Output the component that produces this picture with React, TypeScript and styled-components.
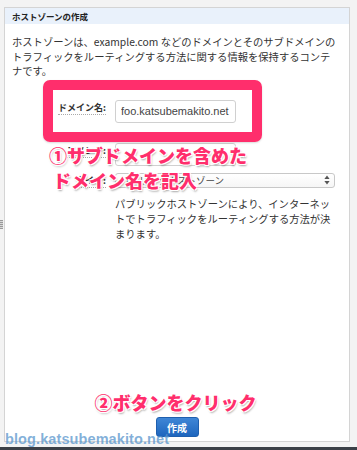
import React from 'react'
import styled, { createGlobalStyle } from 'styled-components'

const GlobalStyle = createGlobalStyle`
  html, body {
    margin: 0;
    padding: 0;
    background: #f3f3f3;
  }
  body {
    font-family: "Noto Sans CJK JP", "Liberation Sans", sans-serif;
    color: #333;
  }
`

const App: React.FC = () => (
  <>
    <GlobalStyle />
    <Page>
      <Handle />
      <Panel>
        <PanelHeader>ホストゾーンの作成</PanelHeader>
        <PanelBody>
          <Intro>
            ホストゾーンは、example.com などのドメインとそのサブドメインの
            <br />
            トラフィックをルーティングする方法に関する情報を保持するコンテ
            <br />
            ナです。
          </Intro>

          <Form>
            <Row>
              <Label>ドメイン名:</Label>
              <TextInput value="foo.katsubemakito.net" readOnly />
            </Row>
            <Row gap={20}>
              <Label>コメント:</Label>
              <TextInput value="" readOnly />
            </Row>
            <Row gap={7}>
              <Label>タイプ:</Label>
              <Select>
                <span>パブリックホストゾーン</span>
                <Arrows>
                  <svg width="6" height="10" viewBox="0 0 6 10">
                    <path d="M3 0.5 L5.6 4 H0.4 Z" fill="#555" />
                    <path d="M3 9.5 L5.6 6 H0.4 Z" fill="#555" />
                  </svg>
                </Arrows>
              </Select>
            </Row>
            <Help>
              パブリックホストゾーンにより、インターネッ
              <br />
              トでトラフィックをルーティングする方法が決
              <br />
              まります。
            </Help>

            <Highlight />
            <Callout>
              ①サブドメインを含めた
              <CalloutLine>ドメイン名を記入</CalloutLine>
            </Callout>
          </Form>
        </PanelBody>

        <PanelFooter>
          <CalloutSmall>②ボタンをクリック</CalloutSmall>
          <CreateButton>作成</CreateButton>
        </PanelFooter>
      </Panel>
      <Watermark>blog.katsubemakito.net</Watermark>
      <BottomBar />
    </Page>
  </>
)

export default App

const Page = styled.div`
  position: relative;
  width: 357px;
  height: 450px;
  padding-top: 7px;
  box-sizing: border-box;
  display: flex;
  flex-direction: column;
  overflow: hidden;
`

const Handle = styled.div`
  position: absolute;
  left: 0;
  top: 220px;
  width: 3px;
  height: 9px;
  background: repeating-linear-gradient(to bottom, #9a9a9a 0 1px, #d8d8d8 1px 2px);
`

const Panel = styled.div`
  margin-left: 4px;
  width: 346px;
  height: 435px;
  box-sizing: border-box;
  border: 1px solid #d4d4d4;
  background: #fff;
  display: flex;
  flex-direction: column;
`

const PanelHeader = styled.div`
  height: 16px;
  background: #e9f1fb;
  font-size: 8.5px;
  font-weight: bold;
  line-height: 16px;
  padding-left: 7px;
  color: #222;
`

const PanelBody = styled.div`
  flex: 1;
  padding: 11px 0 0 7px;
`

const Intro = styled.p`
  margin: 0;
  font-size: 10.3px;
  line-height: 14.5px;
  color: #333;
  white-space: nowrap;
`

const Form = styled.div`
  position: relative;
  margin-top: 21px;
  padding-left: 42px;
`

const Row = styled.div<{ gap?: number }>`
  display: grid;
  grid-template-columns: 52px 1fr;
  column-gap: 9px;
  align-items: start;
  margin-top: ${p => p.gap ?? 0}px;
`

const Label = styled.span`
  justify-self: end;
  font-size: 9px;
  font-weight: bold;
  color: #333;
  line-height: 12px;
  margin-top: 2px;
  border-bottom: 1px dotted #aaa;
  white-space: nowrap;
`

const TextInput = styled.input`
  width: 121px;
  height: 23px;
  box-sizing: border-box;
  border: 1px solid #d0d0d0;
  border-radius: 3px;
  padding: 0 5px;
  font-family: "Liberation Sans", Arial, sans-serif;
  font-size: 11px;
  color: #444;
  outline: none;
`

const Select = styled.div`
  width: 220px;
  height: 15px;
  box-sizing: border-box;
  border: 1px solid #c8c8c8;
  border-radius: 3px;
  display: flex;
  align-items: center;
  justify-content: space-between;
  padding: 0 4px;
  font-size: 9.5px;
  color: #444;
  background: linear-gradient(#fff, #f6f6f6);
`

const Arrows = styled.span`
  display: flex;
  align-items: center;
`

const Help = styled.p`
  margin: 8px 0 0 61px;
  font-size: 10.3px;
  line-height: 15px;
  color: #333;
  white-space: nowrap;
`

const Highlight = styled.div`
  position: absolute;
  left: 31px;
  top: -20px;
  width: 219px;
  height: 62px;
  box-sizing: border-box;
  border: 10px solid #ff2e6c;
  border-radius: 7px;
  box-shadow: 0 1px 2px rgba(0, 0, 0, 0.15);
`

const Callout = styled.div`
  position: absolute;
  left: 37px;
  top: 43px;
  font-size: 18px;
  font-weight: 900;
  line-height: 25px;
  color: #ff2e6c;
  white-space: nowrap;
  text-shadow:
    -1px -1px 0 #fff, 1px -1px 0 #fff, -1px 1px 0 #fff, 1px 1px 0 #fff,
    1px 2px 2px rgba(0, 0, 0, 0.35);
`

const CalloutLine = styled.div`
  padding-left: 4px;
`

const PanelFooter = styled.div`
  display: flex;
  flex-direction: column;
  align-items: center;
  padding-bottom: 4px;
`

const CalloutSmall = styled.div`
  margin-left: -3px;
  font-size: 18px;
  font-weight: 900;
  line-height: 24px;
  color: #ff2e6c;
  white-space: nowrap;
  text-shadow:
    -1px -1px 0 #fff, 1px -1px 0 #fff, -1px 1px 0 #fff, 1px 1px 0 #fff,
    1px 2px 2px rgba(0, 0, 0, 0.35);
`

const CreateButton = styled.button`
  margin-top: 3px;
  width: 43px;
  height: 20px;
  border: 1px solid #1f5fae;
  border-radius: 3px;
  background: linear-gradient(#3f86d6, #1e66be);
  color: #fff;
  font-family: "Noto Sans CJK JP", sans-serif;
  font-size: 10px;
  font-weight: bold;
  padding: 0;
`

const Watermark = styled.div`
  position: absolute;
  left: 5px;
  top: 431px;
  font-family: "Liberation Sans", Arial, sans-serif;
  font-size: 14.5px;
  font-weight: bold;
  color: rgba(90, 150, 205, 0.75);
  letter-spacing: 0.1px;
  white-space: nowrap;
`

const BottomBar = styled.div`
  margin-top: auto;
  height: 3px;
  background: #3b4047;
`
